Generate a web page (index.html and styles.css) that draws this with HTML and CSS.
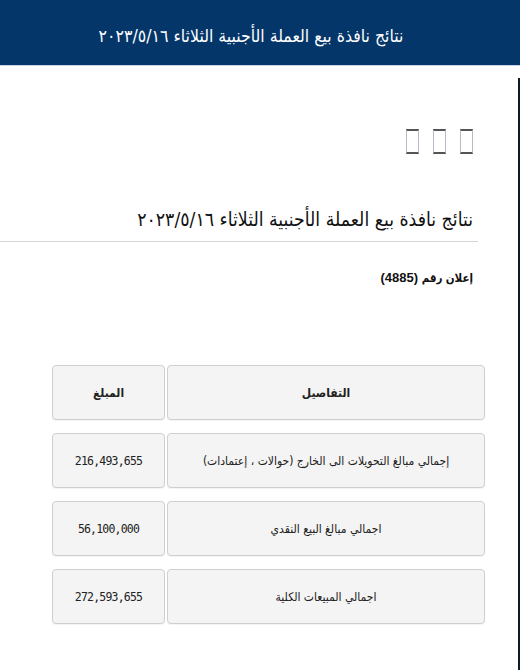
FILE: index.html
```html
<!DOCTYPE html>
<html lang="ar" dir="rtl">
<head>
<meta charset="utf-8">
<link rel="stylesheet" href="styles.css">
</head>
<body>
<header class="topbar">
  <h1 class="topbar-title">نتائج نافذة بيع العملة الأجنبية الثلاثاء ٢٠٢٣/٥/١٦</h1>
</header>
<main class="page">
  <div class="tools">
    <span class="tofu"></span>
    <span class="tofu"></span>
    <span class="tofu"></span>
  </div>
  <h2 class="title">نتائج نافذة بيع العملة الأجنبية الثلاثاء ٢٠٢٣/٥/١٦</h2>
  <div class="rule"></div>
  <p class="notice"><span class="notice-ar">إعلان رقم</span> (4885)</p>
  <div class="table">
    <div class="row head">
      <div class="cell details">التفاصيل</div>
      <div class="cell amount">المبلغ</div>
    </div>
    <div class="row">
      <div class="cell details">إجمالي مبالغ التحويلات الى الخارج (حوالات ، إعتمادات)</div>
      <div class="cell amount num">216,493,655</div>
    </div>
    <div class="row">
      <div class="cell details">اجمالي مبالغ البيع النقدي</div>
      <div class="cell amount num">56,100,000</div>
    </div>
    <div class="row">
      <div class="cell details">اجمالي المبيعات الكلية</div>
      <div class="cell amount num">272,593,655</div>
    </div>
  </div>
</main>
</body>
</html>
```
FILE: styles.css
```css
* { box-sizing: border-box; }
html, body { margin: 0; padding: 0; background: #fff; }
body {
  font-family: "DejaVu Sans Condensed", "DejaVu Sans", sans-serif;
  color: #222;
  width: 520px;
  height: 670px;
  overflow: hidden;
}
.topbar {
  height: 66px;
  background: #043669;
  border-bottom: 1px solid #c9d3e3;
  display: flex;
  align-items: center;
  justify-content: center;
}
.topbar-title {
  margin: 0;
  color: #fff;
  font-weight: normal;
  font-size: 17.5px;
  letter-spacing: -0.2px;
  padding-top: 6px;
  padding-right: 18px;
}
.page {
  margin-top: 12px;
  border-right: 2px solid #0d1b2a;
  height: 592px;
  padding-top: 51px;
}
.tools {
  display: flex;
  gap: 14px;
  padding-right: 45px;
}
.tofu {
  display: block;
  width: 13px;
  height: 25px;
  border: 1px solid #b9b9c8;
  border-top: 2px solid #555;
  border-bottom: 2px solid #555;
}
.title {
  margin: 50px 45px 0 0;
  font-weight: normal;
  font-size: 19.3px;
  color: #111;
  letter-spacing: -0.2px;
  line-height: 32px;
}
.rule {
  width: 478px;
  height: 1px;
  background: #d6d6d6;
  margin: 5px 40px 0 0;
}
.notice {
  margin: 28px 45px 0 0;
  font-size: 13px;
  font-weight: bold;
  font-family: "Liberation Sans", "DejaVu Sans Condensed", sans-serif;
  color: #111;
}
.notice-ar {
  font-size: 11.5px;
}
.table {
  margin: 80px 33px 0 0;
  width: 433px;
  display: flex;
  flex-direction: column;
  gap: 13px;
}
.row {
  display: grid;
  grid-template-columns: 318px 113px;
  gap: 2px;
  height: 55px;
}
.cell {
  background: #f4f4f4;
  border: 1px solid #cfcfcf;
  border-radius: 4px;
  display: flex;
  align-items: center;
  justify-content: center;
  font-size: 12px;
  color: #222;
  box-shadow: 0 1px 1px rgba(0,0,0,0.05);
}
.head .cell { font-weight: bold; }
.num {
  font-family: "DejaVu Sans Mono", "Liberation Mono", monospace;
  font-size: 11.5px;
  letter-spacing: -0.8px;
  color: #222;
}
```
